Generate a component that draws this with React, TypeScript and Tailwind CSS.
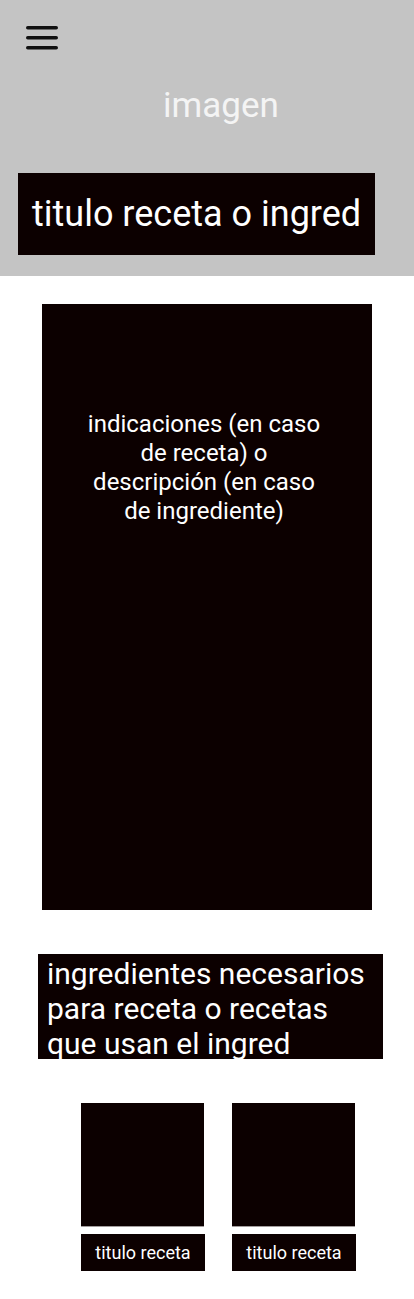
import React from "react";

function Card() {
  return (
    <div className="flex flex-col w-[124px]">
      <div className="w-[123px] h-[124px] bg-[#0c0000] border-b border-[#a39d9d]" />
      <div className="mt-[7px] h-[37px] bg-[#0c0000] flex items-center justify-center text-white text-[18px]">
        titulo receta
      </div>
    </div>
  );
}

export default function App() {
  return (
    <div className="w-[414px] min-h-[1299px] bg-white" style={{ fontFamily: "Roboto, 'Noto Sans', sans-serif" }}>
      <header className="bg-[#c4c4c4] h-[276px] flex flex-col">
        <div className="pl-[26px] pt-[26px]">
          <svg width="32" height="24" viewBox="0 0 32 24" className="block">
            <rect x="0" y="0" width="32" height="3.5" rx="1.75" fill="#111" />
            <rect x="0" y="10" width="32" height="3.5" rx="1.75" fill="#111" />
            <rect x="0" y="20" width="32" height="3.5" rx="1.75" fill="#111" />
          </svg>
        </div>
        <div className="mt-[36px] pl-[28px] text-center text-[#f4f4f4] text-[35px] leading-[40px]">imagen</div>
        <div className="mt-[47px] ml-[18px] w-[357px] h-[82px] bg-[#0c0000] flex items-center pl-[14px] text-white text-[36px] leading-none">
          titulo receta o ingred
        </div>
      </header>
      <section className="mt-[28px] ml-[42px] w-[330px] h-[606px] bg-[#0c0000] pt-[106px] pl-[42px] pr-[48px] text-center text-white text-[24px] leading-[29px]">
        indicaciones (en caso de receta) o descripción (en caso de ingrediente)
      </section>
      <section className="mt-[44px] ml-[38px] w-[345px] h-[105px] bg-[#0c0000] pl-[9px] pt-[2px] text-white text-[30px] leading-[35px]">
        ingredientes necesarios para receta o recetas que usan el ingred
      </section>
      <div className="mt-[44px] ml-[81px] flex gap-[27px]">
        <Card />
        <Card />
      </div>
    </div>
  );
}
